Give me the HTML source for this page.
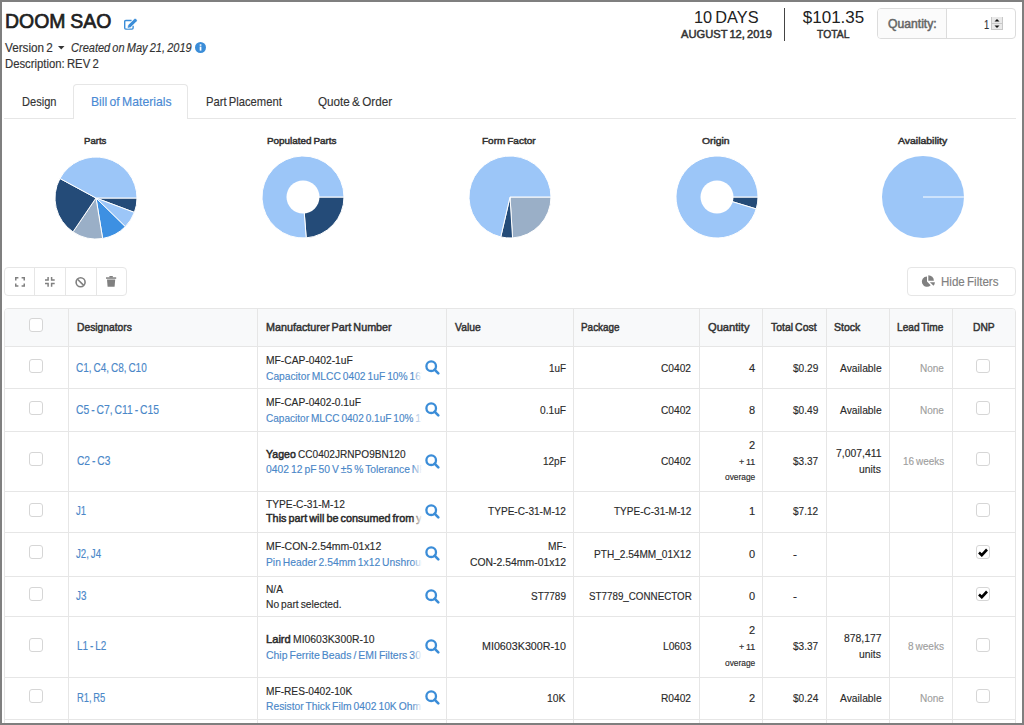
<!DOCTYPE html>
<html><head><meta charset="utf-8"><style>
html,body{margin:0;padding:0;}
body{width:1024px;height:725px;overflow:hidden;position:relative;background:#fff;font-family:"Liberation Sans",sans-serif;}
.t{position:absolute;white-space:nowrap;line-height:1;transform-origin:0 0;}
.r{position:absolute;}
.cb{width:14px;height:14px;box-sizing:border-box;border:1px solid #d6d6d6;border-radius:3px;background:#fff;}
.fade{position:absolute;width:10px;background:linear-gradient(to right,rgba(255,255,255,0),#fff 100%);}
.frame{position:absolute;left:0;top:0;width:1024px;height:725px;box-sizing:border-box;border:2px solid #7f7f7f;z-index:10;}
</style></head><body>
<div class="t" style="left:4.70px;top:11.00px;font-size:20.5px;color:#212121;word-spacing:-0.615px;transform:scaleX(0.9489);-webkit-text-stroke:0.7px #212121;">DOOM SAO</div>
<svg class="r" style="left:123px;top:18px" width="16" height="14" viewBox="0 0 16 14">
<path d="M8.6 2.5 H2.8 Q1.7 2.5 1.7 3.6 V10 Q1.7 11.1 2.8 11.1 H9 Q10.1 11.1 10.1 10 V7.8" fill="none" stroke="#3b8dd8" stroke-width="1.4"/>
<path d="M4.3 10.3 L5.0 7.0 L11.4 0.8 Q12.2 0.1 13.0 0.8 L13.9 1.7 Q14.6 2.5 13.9 3.3 L7.6 9.6 Z" fill="#3b8dd8" stroke="#fff" stroke-width="0.6"/>
</svg>
<div class="t" style="left:4.70px;top:42.00px;font-size:12px;color:#333;-webkit-text-stroke:0.15px #333;word-spacing:-1.020px;transform:scaleX(0.9770);">Version 2</div>
<svg class="r" style="left:58px;top:46px" width="7" height="4" viewBox="0 0 7 4"><path d="M0 0 h6.5 l-3.25 3.5 z" fill="#333"/></svg>
<div class="t" style="left:70.50px;top:42.00px;font-size:12px;color:#333;-webkit-text-stroke:0.15px #333;font-style:italic;word-spacing:-1.020px;transform:scaleX(0.9188);">Created on May 21, 2019</div>
<svg class="r" style="left:194.5px;top:42px" width="11" height="11" viewBox="0 0 11 11"><circle cx="5.5" cy="5.5" r="5.5" fill="#3b8dd8"/><rect x="4.7" y="4.6" width="1.7" height="4" fill="#fff"/><rect x="4.7" y="2.3" width="1.7" height="1.5" fill="#fff"/></svg>
<div class="t" style="left:4.70px;top:58.00px;font-size:12px;color:#333;-webkit-text-stroke:0.15px #333;word-spacing:-1.020px;transform:scaleX(0.9430);">Description: REV 2</div>
<div class="t" style="left:694.40px;top:9.00px;font-size:17px;color:#212121;word-spacing:-1.445px;transform:scaleX(0.9598);">10 DAYS</div>
<div class="t" style="left:680.70px;top:29.00px;font-size:11.3px;color:#333;word-spacing:-0.961px;transform:scaleX(0.9872);-webkit-text-stroke:0.5px #333;">AUGUST 12, 2019</div>
<div class="r" style="left:784px;top:8px;width:1px;height:33px;background:#444;"></div>
<div class="t" style="left:802.80px;top:9.00px;font-size:17px;color:#212121;">$101.35</div>
<div class="t" style="left:816.90px;top:29.00px;font-size:11.3px;color:#333;transform:scaleX(0.9165);-webkit-text-stroke:0.5px #333;">TOTAL</div>
<div class="r" style="left:877px;top:8px;width:139px;height:31px;border:1px solid #dcdcdc;border-radius:4px;box-sizing:border-box;background:#fff;"></div>
<div class="r" style="left:878px;top:9px;width:68px;height:29px;background:#fbfbfb;border-radius:3px 0 0 3px;"></div>
<div class="r" style="left:946px;top:9px;width:1px;height:29px;background:#dcdcdc;"></div>
<div class="t" style="left:887.90px;top:18.00px;font-size:12px;color:#666;transform:scaleX(1.0135);-webkit-text-stroke:0.5px #666;">Quantity:</div>
<div class="t" style="left:984.20px;top:19.00px;font-size:12px;color:#333;-webkit-text-stroke:0.15px #333;transform:scaleX(0.7820);">1</div>
<svg class="r" style="left:991px;top:17px" width="12" height="13" viewBox="0 0 12 13">
<rect x="0" y="0" width="12" height="13" fill="#e9e9e9"/><rect x="0" y="0" width="1" height="13" fill="#c8c8c8"/><rect x="11" y="0" width="1" height="13" fill="#c8c8c8"/><rect x="0" y="6" width="12" height="1" fill="#c8c8c8"/><rect x="0" y="12" width="12" height="1" fill="#c8c8c8"/>
<path d="M3.5 4.5 L6 2 L8.5 4.5 z" fill="#111"/><path d="M3.5 8.5 L6 11 L8.5 8.5 z" fill="#111"/></svg>
<div class="r" style="left:4px;top:118px;width:1012px;height:1px;background:#e6e6e6;"></div>
<div class="r" style="left:73px;top:84px;width:115px;height:35px;border:1px solid #e6e6e6;border-bottom:none;border-radius:4px 4px 0 0;box-sizing:border-box;background:#fff;"></div>
<div class="t" style="left:21.50px;top:95.00px;font-size:13px;color:#333;-webkit-text-stroke:0.15px #333;transform:scaleX(0.8529);">Design</div>
<div class="t" style="left:90.80px;top:95.00px;font-size:13px;color:#4a8ad4;-webkit-text-stroke:0.15px #4a8ad4;word-spacing:-1.105px;transform:scaleX(0.9367);">Bill of Materials</div>
<div class="t" style="left:206.20px;top:95.00px;font-size:13px;color:#333;-webkit-text-stroke:0.15px #333;word-spacing:-1.105px;transform:scaleX(0.8639);">Part Placement</div>
<div class="t" style="left:317.50px;top:95.00px;font-size:13px;color:#333;-webkit-text-stroke:0.15px #333;word-spacing:-1.105px;transform:scaleX(0.8999);">Quote &amp; Order</div>
<div class="t" style="left:84.05px;top:136.00px;font-size:9.5px;color:#333;transform:scaleX(1.0068);-webkit-text-stroke:0.5px #333;">Parts</div>
<div class="t" style="left:267.45px;top:136.00px;font-size:9.5px;color:#333;word-spacing:-0.808px;transform:scaleX(1.0405);-webkit-text-stroke:0.5px #333;">Populated Parts</div>
<div class="t" style="left:482.30px;top:136.00px;font-size:9.5px;color:#333;word-spacing:-0.808px;transform:scaleX(1.0522);-webkit-text-stroke:0.5px #333;">Form Factor</div>
<div class="t" style="left:702.30px;top:136.00px;font-size:9.5px;color:#333;transform:scaleX(1.0888);-webkit-text-stroke:0.5px #333;">Origin</div>
<div class="t" style="left:898.30px;top:136.00px;font-size:9.5px;color:#333;transform:scaleX(1.1007);-webkit-text-stroke:0.5px #333;">Availability</div>
<svg class="r" style="left:53.30px;top:154.50px" width="86.0" height="86.0" viewBox="-43.0 -43.0 86.0 86.0"><path d="M0 0 L41.000 0.000 A41.0 41.0 0 0 1 38.378 14.426 Z" fill="#244b78" stroke="#fff" stroke-width="1" stroke-linejoin="round"/><path d="M0 0 L38.378 14.426 A41.0 41.0 0 0 1 29.293 28.686 Z" fill="#9cc6f8" stroke="#fff" stroke-width="1" stroke-linejoin="round"/><path d="M0 0 L29.293 28.686 A41.0 41.0 0 0 1 6.626 40.461 Z" fill="#3d90e2" stroke="#fff" stroke-width="1" stroke-linejoin="round"/><path d="M0 0 L6.626 40.461 A41.0 41.0 0 0 1 -23.045 33.910 Z" fill="#9aafc7" stroke="#fff" stroke-width="1" stroke-linejoin="round"/><path d="M0 0 L-23.045 33.910 A41.0 41.0 0 0 1 -36.066 -19.501 Z" fill="#244b78" stroke="#fff" stroke-width="1" stroke-linejoin="round"/><path d="M0 0 L-36.066 -19.501 A41.0 41.0 0 0 1 41.000 -0.000 Z" fill="#9cc6f8" stroke="#fff" stroke-width="1" stroke-linejoin="round"/></svg>
<svg class="r" style="left:260.40px;top:153.90px" width="86.0" height="86.0" viewBox="-43.0 -43.0 86.0 86.0"><path d="M0 0 L41.000 0.000 A41.0 41.0 0 0 1 3.217 40.874 Z" fill="#244b78" stroke="#fff" stroke-width="1" stroke-linejoin="round"/><path d="M0 0 L3.217 40.874 A41.0 41.0 0 1 1 41.000 -0.000 Z" fill="#9cc6f8" stroke="#fff" stroke-width="1" stroke-linejoin="round"/><circle cx="0" cy="0" r="16.5" fill="#fff"/></svg>
<svg class="r" style="left:466.70px;top:154.10px" width="86.0" height="86.0" viewBox="-43.0 -43.0 86.0 86.0"><path d="M0 0 L41.000 0.000 A41.0 41.0 0 0 1 2.574 40.919 Z" fill="#9aafc7" stroke="#fff" stroke-width="1" stroke-linejoin="round"/><path d="M0 0 L2.574 40.919 A41.0 41.0 0 0 1 -9.223 39.949 Z" fill="#244b78" stroke="#fff" stroke-width="1" stroke-linejoin="round"/><path d="M0 0 L-9.223 39.949 A41.0 41.0 0 1 1 41.000 -0.000 Z" fill="#9cc6f8" stroke="#fff" stroke-width="1" stroke-linejoin="round"/></svg>
<svg class="r" style="left:673.80px;top:154.10px" width="86.0" height="86.0" viewBox="-43.0 -43.0 86.0 86.0"><path d="M0 0 L41.000 0.000 A41.0 41.0 0 0 1 39.229 11.919 Z" fill="#244b78" stroke="#fff" stroke-width="1" stroke-linejoin="round"/><path d="M0 0 L39.229 11.919 A41.0 41.0 0 1 1 41.000 -0.000 Z" fill="#9cc6f8" stroke="#fff" stroke-width="1" stroke-linejoin="round"/><circle cx="0" cy="0" r="16.5" fill="#fff"/></svg>
<svg class="r" style="left:880.30px;top:154.10px" width="86.0" height="86.0" viewBox="-43.0 -43.0 86.0 86.0"><circle cx="0" cy="0" r="41.0" fill="#9cc6f8"/><line x1="0" y1="0" x2="41.0" y2="0" stroke="#fff" stroke-width="1"/></svg>
<div class="r" style="left:4px;top:267px;width:123px;height:29px;border:1px solid #e6e6e6;border-radius:4px;box-sizing:border-box;"></div>
<div class="r" style="left:34px;top:268px;width:1px;height:27px;background:#e6e6e6;"></div>
<div class="r" style="left:65px;top:268px;width:1px;height:27px;background:#e6e6e6;"></div>
<div class="r" style="left:96px;top:268px;width:1px;height:27px;background:#e6e6e6;"></div>
<svg class="r" style="left:14.5px;top:277px" width="10" height="10" viewBox="0 0 10 10" fill="none" stroke="#808080" stroke-width="1.5">
<path d="M0.75 3.4 V0.75 H3.4 M6.6 0.75 H9.25 V3.4 M9.25 6.4 V9.05 H6.6 M3.4 9.05 H0.75 V6.4"/></svg>
<svg class="r" style="left:45.3px;top:277px" width="10" height="10" viewBox="0 0 10 10" fill="none" stroke="#808080" stroke-width="1.5">
<path d="M0 3.1 H3.1 V0 M6.6 0 V3.1 H9.7 M9.7 6.5 H6.6 V9.7 M3.1 9.7 V6.5 H0"/></svg>
<svg class="r" style="left:75px;top:276.5px" width="12" height="11" viewBox="0 0 12 11" fill="none" stroke="#808080" stroke-width="1.6">
<circle cx="5.6" cy="5.3" r="4.5"/><path d="M2.5 2.2 L8.7 8.4"/></svg>
<svg class="r" style="left:106px;top:276px" width="11" height="11" viewBox="0 0 11 11" fill="#808080">
<rect x="0" y="1.3" width="10.2" height="1.5"/><rect x="3.4" y="0" width="3.4" height="1.6"/><path d="M1 3.5 H9.2 L8.6 10.8 H1.6 Z"/></svg>
<div class="r" style="left:907px;top:267px;width:109px;height:29px;border:1px solid #e6e6e6;border-radius:4px;box-sizing:border-box;"></div>
<svg class="r" style="left:916px;top:270px" width="24" height="22" viewBox="916 270 24 22" fill="#808080">
<path d="M927 281.6 L927 276.4 A5.2 5.2 0 1 0 930.68 285.28 Z"/><path d="M928.3 280.8 V275.2 A5.6 5.6 0 0 1 933.9 280.8 Z"/><path d="M929.9 282.2 H934.9 A5 5 0 0 1 933.44 285.74 Z"/></svg>
<div class="t" style="left:940.70px;top:276.00px;font-size:12px;color:#808080;-webkit-text-stroke:0.15px #808080;word-spacing:-1.020px;transform:scaleX(0.9635);">Hide Filters</div>
<div class="r" style="left:4px;top:308px;width:1012px;height:422px;border:1px solid #e6e6e6;border-radius:4px 4px 0 0;box-sizing:border-box;"></div>
<div class="r" style="left:5px;top:309px;width:1010px;height:37px;background:#f8f9fa;border-radius:3px 3px 0 0;"></div>
<div class="r" style="left:5px;top:346px;width:1010px;height:1px;background:#e6e6e6;"></div>
<div class="r" style="left:5px;top:388px;width:1010px;height:1px;background:#e6e6e6;"></div>
<div class="r" style="left:5px;top:431px;width:1010px;height:1px;background:#e6e6e6;"></div>
<div class="r" style="left:5px;top:491px;width:1010px;height:1px;background:#e6e6e6;"></div>
<div class="r" style="left:5px;top:531.5px;width:1010px;height:1.0px;background:#e6e6e6;"></div>
<div class="r" style="left:5px;top:576px;width:1010px;height:1px;background:#e6e6e6;"></div>
<div class="r" style="left:5px;top:616px;width:1010px;height:1px;background:#e6e6e6;"></div>
<div class="r" style="left:5px;top:676.5px;width:1010px;height:1.0px;background:#e6e6e6;"></div>
<div class="r" style="left:5px;top:719px;width:1010px;height:1px;background:#e6e6e6;"></div>
<div class="r" style="left:68px;top:309px;width:1px;height:421px;background:#e6e6e6;"></div>
<div class="r" style="left:257px;top:309px;width:1px;height:421px;background:#e6e6e6;"></div>
<div class="r" style="left:446px;top:309px;width:1px;height:421px;background:#e6e6e6;"></div>
<div class="r" style="left:573px;top:309px;width:1px;height:421px;background:#e6e6e6;"></div>
<div class="r" style="left:699px;top:309px;width:1px;height:421px;background:#e6e6e6;"></div>
<div class="r" style="left:762px;top:309px;width:1px;height:421px;background:#e6e6e6;"></div>
<div class="r" style="left:826px;top:309px;width:1px;height:421px;background:#e6e6e6;"></div>
<div class="r" style="left:889px;top:309px;width:1px;height:421px;background:#e6e6e6;"></div>
<div class="r" style="left:952px;top:309px;width:1px;height:421px;background:#e6e6e6;"></div>
<div class="r cb" style="left:29px;top:318px;"></div>
<div class="t" style="left:76.70px;top:322.00px;font-size:11.5px;color:#333;transform:scaleX(0.8932);-webkit-text-stroke:0.5px #333;">Designators</div>
<div class="t" style="left:265.90px;top:322.00px;font-size:11.5px;color:#333;word-spacing:-0.978px;transform:scaleX(0.9367);-webkit-text-stroke:0.5px #333;">Manufacturer Part Number</div>
<div class="t" style="left:455.00px;top:322.00px;font-size:11.5px;color:#333;transform:scaleX(0.9002);-webkit-text-stroke:0.5px #333;">Value</div>
<div class="t" style="left:581.00px;top:322.00px;font-size:11.5px;color:#333;transform:scaleX(0.8626);-webkit-text-stroke:0.5px #333;">Package</div>
<div class="t" style="left:707.50px;top:322.00px;font-size:11.5px;color:#333;transform:scaleX(0.9685);-webkit-text-stroke:0.5px #333;">Quantity</div>
<div class="t" style="left:771.00px;top:322.00px;font-size:11.5px;color:#333;word-spacing:-0.978px;transform:scaleX(0.9089);-webkit-text-stroke:0.5px #333;">Total Cost</div>
<div class="t" style="left:833.50px;top:322.00px;font-size:11.5px;color:#333;transform:scaleX(0.9132);-webkit-text-stroke:0.5px #333;">Stock</div>
<div class="t" style="left:897.20px;top:322.00px;font-size:11.5px;color:#333;word-spacing:-0.978px;transform:scaleX(0.8801);-webkit-text-stroke:0.5px #333;">Lead Time</div>
<div class="t" style="left:973.00px;top:322.00px;font-size:11.5px;color:#333;transform:scaleX(0.8930);-webkit-text-stroke:0.5px #333;">DNP</div>
<div class="r cb" style="left:29px;top:359px;"></div>
<div class="r cb" style="left:29px;top:400.5px;"></div>
<div class="r cb" style="left:29px;top:452px;"></div>
<div class="r cb" style="left:29px;top:503px;"></div>
<div class="r cb" style="left:29px;top:545px;"></div>
<div class="r cb" style="left:29px;top:587px;"></div>
<div class="r cb" style="left:29px;top:637.5px;"></div>
<div class="r cb" style="left:29px;top:689px;"></div>
<div class="r cb" style="left:976px;top:359px;"></div>
<div class="r cb" style="left:976px;top:400.5px;"></div>
<div class="r cb" style="left:976px;top:452px;"></div>
<div class="r cb" style="left:976px;top:503px;"></div>
<div class="r cb" style="left:976px;top:545px;"></div>
<svg class="r" style="left:978px;top:547.5px" width="10" height="9" viewBox="0 0 10 9"><path d="M1 4.5 L3.8 7.2 L9 1.5" fill="none" stroke="#000" stroke-width="2.6"/></svg>
<div class="r cb" style="left:976px;top:587px;"></div>
<svg class="r" style="left:978px;top:589.5px" width="10" height="9" viewBox="0 0 10 9"><path d="M1 4.5 L3.8 7.2 L9 1.5" fill="none" stroke="#000" stroke-width="2.6"/></svg>
<div class="r cb" style="left:976px;top:637.5px;"></div>
<div class="r cb" style="left:976px;top:689px;"></div>
<div class="t" style="left:76.20px;top:362.00px;font-size:12px;color:#4a87c8;-webkit-text-stroke:0.15px #4a87c8;word-spacing:-1.020px;transform:scaleX(0.8319);">C1, C4, C8, C10</div>
<div class="t" style="left:76.20px;top:404.00px;font-size:12px;color:#4a87c8;-webkit-text-stroke:0.15px #4a87c8;word-spacing:-1.020px;transform:scaleX(0.8583);">C5 - C7, C11 - C15</div>
<div class="t" style="left:76.60px;top:455.00px;font-size:12px;color:#4a87c8;-webkit-text-stroke:0.15px #4a87c8;word-spacing:-1.020px;transform:scaleX(0.8497);">C2 - C3</div>
<div class="t" style="left:76.30px;top:505.00px;font-size:12px;color:#4a87c8;-webkit-text-stroke:0.15px #4a87c8;transform:scaleX(0.7984);">J1</div>
<div class="t" style="left:76.20px;top:548.00px;font-size:12px;color:#4a87c8;-webkit-text-stroke:0.15px #4a87c8;word-spacing:-1.020px;transform:scaleX(0.8102);">J2, J4</div>
<div class="t" style="left:76.20px;top:590.00px;font-size:12px;color:#4a87c8;-webkit-text-stroke:0.15px #4a87c8;transform:scaleX(0.8221);">J3</div>
<div class="t" style="left:76.90px;top:640.00px;font-size:12px;color:#4a87c8;-webkit-text-stroke:0.15px #4a87c8;word-spacing:-1.020px;transform:scaleX(0.8298);">L1 - L2</div>
<div class="t" style="left:76.90px;top:692.00px;font-size:12px;color:#4a87c8;-webkit-text-stroke:0.15px #4a87c8;word-spacing:-1.020px;transform:scaleX(0.7790);">R1, R5</div>
<div class="t" style="left:265.70px;top:355.00px;font-size:11.5px;color:#2a2a2a;-webkit-text-stroke:0.15px #2a2a2a;transform:scaleX(0.8935);">MF-CAP-0402-1uF</div>
<div class="r" style="left:0;top:0;width:422px;height:725px;overflow:hidden;">
<div class="t" style="left:265.70px;top:371.00px;font-size:11.5px;color:#4a87c8;-webkit-text-stroke:0.15px #4a87c8;word-spacing:-0.978px;transform:scaleX(0.8902);">Capacitor MLCC 0402 1uF 10% 16V X5R</div>
</div>
<div class="fade" style="left:412px;top:369.00px;height:15px;"></div>
<svg class="r" style="left:424.5px;top:359.5px" width="15" height="15" viewBox="0 0 15 15"><circle cx="6.2" cy="6.2" r="4.8" fill="none" stroke="#3b8dd8" stroke-width="2.3"/><path d="M9.6 9.6 L13.3 13.3" stroke="#3b8dd8" stroke-width="2.6" stroke-linecap="round"/></svg>
<div class="t" style="left:265.70px;top:397.00px;font-size:11.5px;color:#2a2a2a;-webkit-text-stroke:0.15px #2a2a2a;transform:scaleX(0.8899);">MF-CAP-0402-0.1uF</div>
<div class="r" style="left:0;top:0;width:422px;height:725px;overflow:hidden;">
<div class="t" style="left:265.70px;top:413.00px;font-size:11.5px;color:#4a87c8;-webkit-text-stroke:0.15px #4a87c8;word-spacing:-0.978px;transform:scaleX(0.8742);">Capacitor MLCC 0402 0.1uF 10% 16V X7R</div>
</div>
<div class="fade" style="left:412px;top:411.00px;height:15px;"></div>
<svg class="r" style="left:424.5px;top:402.0px" width="15" height="15" viewBox="0 0 15 15"><circle cx="6.2" cy="6.2" r="4.8" fill="none" stroke="#3b8dd8" stroke-width="2.3"/><path d="M9.6 9.6 L13.3 13.3" stroke="#3b8dd8" stroke-width="2.6" stroke-linecap="round"/></svg>
<div class="t" style="left:265.70px;top:449.00px;font-size:11.5px;color:#2a2a2a;transform:scaleX(0.9207);-webkit-text-stroke:0.5px #2a2a2a;">Yageo</div>
<div class="t" style="left:298.13px;top:449.00px;font-size:11.5px;color:#2a2a2a;-webkit-text-stroke:0.15px #2a2a2a;transform:scaleX(0.8763);">CC0402JRNPO9BN120</div>
<div class="r" style="left:0;top:0;width:422px;height:725px;overflow:hidden;">
<div class="t" style="left:265.70px;top:464.00px;font-size:11.5px;color:#4a87c8;-webkit-text-stroke:0.15px #4a87c8;word-spacing:-0.978px;transform:scaleX(0.8971);">0402 12 pF 50 V ±5 % Tolerance NP0</div>
</div>
<div class="fade" style="left:412px;top:462.00px;height:15px;"></div>
<svg class="r" style="left:424.5px;top:453.5px" width="15" height="15" viewBox="0 0 15 15"><circle cx="6.2" cy="6.2" r="4.8" fill="none" stroke="#3b8dd8" stroke-width="2.3"/><path d="M9.6 9.6 L13.3 13.3" stroke="#3b8dd8" stroke-width="2.6" stroke-linecap="round"/></svg>
<div class="t" style="left:265.70px;top:499.00px;font-size:11.5px;color:#2a2a2a;-webkit-text-stroke:0.15px #2a2a2a;transform:scaleX(0.8874);">TYPE-C-31-M-12</div>
<div class="r" style="left:0;top:0;width:422px;height:725px;overflow:hidden;">
<div class="t" style="left:265.70px;top:513.00px;font-size:11.5px;color:#2a2a2a;word-spacing:-0.978px;transform:scaleX(0.9416);-webkit-text-stroke:0.5px #2a2a2a;">This part will be consumed from your inventory</div>
</div>
<div class="fade" style="left:412px;top:511.00px;height:15px;"></div>
<svg class="r" style="left:424.5px;top:503.75px" width="15" height="15" viewBox="0 0 15 15"><circle cx="6.2" cy="6.2" r="4.8" fill="none" stroke="#3b8dd8" stroke-width="2.3"/><path d="M9.6 9.6 L13.3 13.3" stroke="#3b8dd8" stroke-width="2.6" stroke-linecap="round"/></svg>
<div class="t" style="left:265.70px;top:541.00px;font-size:11.5px;color:#2a2a2a;-webkit-text-stroke:0.15px #2a2a2a;transform:scaleX(0.9111);">MF-CON-2.54mm-01x12</div>
<div class="r" style="left:0;top:0;width:422px;height:725px;overflow:hidden;">
<div class="t" style="left:265.70px;top:557.00px;font-size:11.5px;color:#4a87c8;-webkit-text-stroke:0.15px #4a87c8;word-spacing:-0.978px;transform:scaleX(0.8952);">Pin Header 2.54mm 1x12 Unshrouded</div>
</div>
<div class="fade" style="left:412px;top:555.00px;height:15px;"></div>
<svg class="r" style="left:424.5px;top:546.25px" width="15" height="15" viewBox="0 0 15 15"><circle cx="6.2" cy="6.2" r="4.8" fill="none" stroke="#3b8dd8" stroke-width="2.3"/><path d="M9.6 9.6 L13.3 13.3" stroke="#3b8dd8" stroke-width="2.6" stroke-linecap="round"/></svg>
<div class="t" style="left:265.70px;top:584.00px;font-size:11.5px;color:#2a2a2a;-webkit-text-stroke:0.15px #2a2a2a;transform:scaleX(0.8877);">N/A</div>
<div class="r" style="left:0;top:0;width:422px;height:725px;overflow:hidden;">
<div class="t" style="left:265.70px;top:599.00px;font-size:11.5px;color:#2a2a2a;-webkit-text-stroke:0.15px #2a2a2a;word-spacing:-0.978px;transform:scaleX(0.8895);">No part selected.</div>
</div>
<div class="fade" style="left:412px;top:597.00px;height:15px;"></div>
<svg class="r" style="left:424.5px;top:588.5px" width="15" height="15" viewBox="0 0 15 15"><circle cx="6.2" cy="6.2" r="4.8" fill="none" stroke="#3b8dd8" stroke-width="2.3"/><path d="M9.6 9.6 L13.3 13.3" stroke="#3b8dd8" stroke-width="2.6" stroke-linecap="round"/></svg>
<div class="t" style="left:265.70px;top:634.00px;font-size:11.5px;color:#2a2a2a;transform:scaleX(0.9678);-webkit-text-stroke:0.5px #2a2a2a;">Laird</div>
<div class="t" style="left:293.03px;top:634.00px;font-size:11.5px;color:#2a2a2a;-webkit-text-stroke:0.15px #2a2a2a;transform:scaleX(0.9037);">MI0603K300R-10</div>
<div class="r" style="left:0;top:0;width:422px;height:725px;overflow:hidden;">
<div class="t" style="left:265.70px;top:650.00px;font-size:11.5px;color:#4a87c8;-webkit-text-stroke:0.15px #4a87c8;word-spacing:-0.978px;transform:scaleX(0.9089);">Chip Ferrite Beads / EMI Filters 30 Ohms</div>
</div>
<div class="fade" style="left:412px;top:648.00px;height:15px;"></div>
<svg class="r" style="left:424.5px;top:638.75px" width="15" height="15" viewBox="0 0 15 15"><circle cx="6.2" cy="6.2" r="4.8" fill="none" stroke="#3b8dd8" stroke-width="2.3"/><path d="M9.6 9.6 L13.3 13.3" stroke="#3b8dd8" stroke-width="2.6" stroke-linecap="round"/></svg>
<div class="t" style="left:265.70px;top:686.00px;font-size:11.5px;color:#2a2a2a;-webkit-text-stroke:0.15px #2a2a2a;transform:scaleX(0.8824);">MF-RES-0402-10K</div>
<div class="r" style="left:0;top:0;width:422px;height:725px;overflow:hidden;">
<div class="t" style="left:265.70px;top:701.00px;font-size:11.5px;color:#4a87c8;-webkit-text-stroke:0.15px #4a87c8;word-spacing:-0.978px;transform:scaleX(0.8949);">Resistor Thick Film 0402 10K Ohm 1%</div>
</div>
<div class="fade" style="left:412px;top:699.00px;height:15px;"></div>
<svg class="r" style="left:424.5px;top:690.25px" width="15" height="15" viewBox="0 0 15 15"><circle cx="6.2" cy="6.2" r="4.8" fill="none" stroke="#3b8dd8" stroke-width="2.3"/><path d="M9.6 9.6 L13.3 13.3" stroke="#3b8dd8" stroke-width="2.6" stroke-linecap="round"/></svg>
<div class="t" style="left:548.60px;top:363.00px;font-size:11.8px;color:#2a2a2a;-webkit-text-stroke:0.15px #2a2a2a;transform:scaleX(0.8354);">1uF</div>
<div class="t" style="left:539.60px;top:405.00px;font-size:11.8px;color:#2a2a2a;-webkit-text-stroke:0.15px #2a2a2a;transform:scaleX(0.8624);">0.1uF</div>
<div class="t" style="left:542.80px;top:456.00px;font-size:11.8px;color:#2a2a2a;-webkit-text-stroke:0.15px #2a2a2a;transform:scaleX(0.8476);">12pF</div>
<div class="t" style="left:487.60px;top:506.00px;font-size:11.8px;color:#2a2a2a;-webkit-text-stroke:0.15px #2a2a2a;transform:scaleX(0.8557);">TYPE-C-31-M-12</div>
<div class="t" style="left:547.60px;top:541.00px;font-size:11.8px;color:#2a2a2a;-webkit-text-stroke:0.15px #2a2a2a;transform:scaleX(0.8592);">MF-</div>
<div class="t" style="left:469.60px;top:557.00px;font-size:11.8px;color:#2a2a2a;-webkit-text-stroke:0.15px #2a2a2a;transform:scaleX(0.8819);">CON-2.54mm-01x12</div>
<div class="t" style="left:530.60px;top:591.00px;font-size:11.8px;color:#2a2a2a;-webkit-text-stroke:0.15px #2a2a2a;transform:scaleX(0.8464);">ST7789</div>
<div class="t" style="left:481.60px;top:641.00px;font-size:11.8px;color:#2a2a2a;-webkit-text-stroke:0.15px #2a2a2a;transform:scaleX(0.9081);">MI0603K300R-10</div>
<div class="t" style="left:547.10px;top:693.00px;font-size:11.8px;color:#2a2a2a;-webkit-text-stroke:0.15px #2a2a2a;transform:scaleX(0.8810);">10K</div>
<div class="t" style="left:661.30px;top:363.00px;font-size:11.8px;color:#2a2a2a;-webkit-text-stroke:0.15px #2a2a2a;transform:scaleX(0.8633);">C0402</div>
<div class="t" style="left:661.30px;top:405.00px;font-size:11.8px;color:#2a2a2a;-webkit-text-stroke:0.15px #2a2a2a;transform:scaleX(0.8633);">C0402</div>
<div class="t" style="left:661.30px;top:456.00px;font-size:11.8px;color:#2a2a2a;-webkit-text-stroke:0.15px #2a2a2a;transform:scaleX(0.8633);">C0402</div>
<div class="t" style="left:613.90px;top:506.00px;font-size:11.8px;color:#2a2a2a;-webkit-text-stroke:0.15px #2a2a2a;transform:scaleX(0.8491);">TYPE-C-31-M-12</div>
<div class="t" style="left:594.30px;top:549.00px;font-size:11.8px;color:#2a2a2a;-webkit-text-stroke:0.15px #2a2a2a;transform:scaleX(0.8550);">PTH_2.54MM_01X12</div>
<div class="t" style="left:588.50px;top:591.00px;font-size:11.8px;color:#2a2a2a;-webkit-text-stroke:0.15px #2a2a2a;transform:scaleX(0.8310);">ST7789_CONNECTOR</div>
<div class="t" style="left:662.90px;top:641.00px;font-size:11.8px;color:#2a2a2a;-webkit-text-stroke:0.15px #2a2a2a;transform:scaleX(0.8659);">L0603</div>
<div class="t" style="left:661.30px;top:693.00px;font-size:11.8px;color:#2a2a2a;-webkit-text-stroke:0.15px #2a2a2a;transform:scaleX(0.8633);">R0402</div>
<div class="t" style="left:748.88px;top:363.00px;font-size:11.8px;color:#2a2a2a;-webkit-text-stroke:0.15px #2a2a2a;transform:scaleX(0.9350);">4</div>
<div class="t" style="left:748.88px;top:405.00px;font-size:11.8px;color:#2a2a2a;-webkit-text-stroke:0.15px #2a2a2a;transform:scaleX(0.9350);">8</div>
<div class="t" style="left:748.88px;top:440.00px;font-size:11.8px;color:#2a2a2a;-webkit-text-stroke:0.15px #2a2a2a;transform:scaleX(0.9350);">2</div>
<div class="t" style="left:738.80px;top:457.00px;font-size:9.5px;color:#2a2a2a;-webkit-text-stroke:0.15px #2a2a2a;word-spacing:-0.808px;transform:scaleX(0.9395);">+ 11</div>
<div class="t" style="left:724.70px;top:472.00px;font-size:9.5px;color:#2a2a2a;-webkit-text-stroke:0.15px #2a2a2a;transform:scaleX(0.8821);">overage</div>
<div class="t" style="left:748.88px;top:506.00px;font-size:11.8px;color:#2a2a2a;-webkit-text-stroke:0.15px #2a2a2a;transform:scaleX(0.9350);">1</div>
<div class="t" style="left:748.88px;top:549.00px;font-size:11.8px;color:#2a2a2a;-webkit-text-stroke:0.15px #2a2a2a;transform:scaleX(0.9350);">0</div>
<div class="t" style="left:748.88px;top:591.00px;font-size:11.8px;color:#2a2a2a;-webkit-text-stroke:0.15px #2a2a2a;transform:scaleX(0.9350);">0</div>
<div class="t" style="left:748.88px;top:625.00px;font-size:11.8px;color:#2a2a2a;-webkit-text-stroke:0.15px #2a2a2a;transform:scaleX(0.9350);">2</div>
<div class="t" style="left:738.80px;top:642.00px;font-size:9.5px;color:#2a2a2a;-webkit-text-stroke:0.15px #2a2a2a;word-spacing:-0.808px;transform:scaleX(0.9395);">+ 11</div>
<div class="t" style="left:724.70px;top:658.00px;font-size:9.5px;color:#2a2a2a;-webkit-text-stroke:0.15px #2a2a2a;transform:scaleX(0.8821);">overage</div>
<div class="t" style="left:748.88px;top:693.00px;font-size:11.8px;color:#2a2a2a;-webkit-text-stroke:0.15px #2a2a2a;transform:scaleX(0.9350);">2</div>
<div class="t" style="left:792.50px;top:363.00px;font-size:11.8px;color:#2a2a2a;-webkit-text-stroke:0.15px #2a2a2a;transform:scaleX(0.8562);">$0.29</div>
<div class="t" style="left:792.50px;top:405.00px;font-size:11.8px;color:#2a2a2a;-webkit-text-stroke:0.15px #2a2a2a;transform:scaleX(0.8562);">$0.49</div>
<div class="t" style="left:792.60px;top:456.00px;font-size:11.8px;color:#2a2a2a;-webkit-text-stroke:0.15px #2a2a2a;transform:scaleX(0.8528);">$3.37</div>
<div class="t" style="left:792.60px;top:506.00px;font-size:11.8px;color:#2a2a2a;-webkit-text-stroke:0.15px #2a2a2a;transform:scaleX(0.8528);">$7.12</div>
<div class="t" style="left:793.00px;top:549.00px;font-size:11.8px;color:#2a2a2a;-webkit-text-stroke:0.15px #2a2a2a;">-</div>
<div class="t" style="left:793.00px;top:591.00px;font-size:11.8px;color:#2a2a2a;-webkit-text-stroke:0.15px #2a2a2a;">-</div>
<div class="t" style="left:792.60px;top:641.00px;font-size:11.8px;color:#2a2a2a;-webkit-text-stroke:0.15px #2a2a2a;transform:scaleX(0.8528);">$3.37</div>
<div class="t" style="left:792.50px;top:693.00px;font-size:11.8px;color:#2a2a2a;-webkit-text-stroke:0.15px #2a2a2a;transform:scaleX(0.8562);">$0.24</div>
<div class="t" style="left:839.70px;top:363.00px;font-size:11.8px;color:#2a2a2a;-webkit-text-stroke:0.15px #2a2a2a;transform:scaleX(0.8730);">Available</div>
<div class="t" style="left:839.70px;top:405.00px;font-size:11.8px;color:#2a2a2a;-webkit-text-stroke:0.15px #2a2a2a;transform:scaleX(0.8730);">Available</div>
<div class="t" style="left:835.80px;top:448.00px;font-size:11.8px;color:#2a2a2a;-webkit-text-stroke:0.15px #2a2a2a;transform:scaleX(0.8818);">7,007,411</div>
<div class="t" style="left:859.40px;top:464.00px;font-size:11.8px;color:#2a2a2a;-webkit-text-stroke:0.15px #2a2a2a;transform:scaleX(0.8778);">units</div>
<div class="t" style="left:843.80px;top:633.00px;font-size:11.8px;color:#2a2a2a;-webkit-text-stroke:0.15px #2a2a2a;transform:scaleX(0.8792);">878,177</div>
<div class="t" style="left:859.40px;top:649.00px;font-size:11.8px;color:#2a2a2a;-webkit-text-stroke:0.15px #2a2a2a;transform:scaleX(0.8778);">units</div>
<div class="t" style="left:839.70px;top:693.00px;font-size:11.8px;color:#2a2a2a;-webkit-text-stroke:0.15px #2a2a2a;transform:scaleX(0.8730);">Available</div>
<div class="t" style="left:920.40px;top:363.00px;font-size:11.8px;color:#9e9e9e;-webkit-text-stroke:0.15px #9e9e9e;transform:scaleX(0.8475);">None</div>
<div class="t" style="left:920.40px;top:405.00px;font-size:11.8px;color:#9e9e9e;-webkit-text-stroke:0.15px #9e9e9e;transform:scaleX(0.8475);">None</div>
<div class="t" style="left:903.10px;top:456.00px;font-size:11.8px;color:#9e9e9e;-webkit-text-stroke:0.15px #9e9e9e;word-spacing:-1.003px;transform:scaleX(0.8434);">16 weeks</div>
<div class="t" style="left:908.30px;top:641.00px;font-size:11.8px;color:#9e9e9e;-webkit-text-stroke:0.15px #9e9e9e;word-spacing:-1.003px;transform:scaleX(0.8511);">8 weeks</div>
<div class="t" style="left:920.40px;top:693.00px;font-size:11.8px;color:#9e9e9e;-webkit-text-stroke:0.15px #9e9e9e;transform:scaleX(0.8475);">None</div>
<div class="frame"></div>
</body></html>
